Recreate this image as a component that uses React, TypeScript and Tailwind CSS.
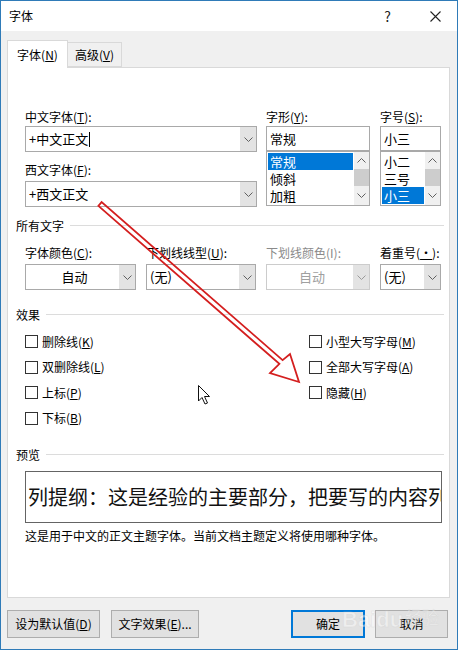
import clsx from "clsx";

const font = "font-['Noto_Sans_CJK_SC',sans-serif]";

function Chevron({ up = false, color = "#606060" }: { up?: boolean; color?: string }) {
  return (
    <svg width="9" height="5" viewBox="0 0 9 5">
      <polyline
        points={up ? "0.5,4.5 4.5,0.5 8.5,4.5" : "0.5,0.5 4.5,4.5 8.5,0.5"}
        fill="none"
        stroke={color}
        strokeWidth="1"
      />
    </svg>
  );
}

function Combo({
  className,
  children,
  center,
  disabled,
}: {
  className?: string;
  children?: React.ReactNode;
  center?: boolean;
  disabled?: boolean;
}) {
  return (
    <div
      className={clsx(
        "flex h-[26px] border bg-white",
        disabled ? "border-[#cccccc]" : "border-[#a9a9a9]",
        className
      )}
    >
      <div
        className={clsx(
          "flex flex-1 items-center text-[13px] whitespace-nowrap",
          center ? "justify-center pl-[4px]" : "pl-[3px]",
          disabled ? "text-[#a0a0a0]" : "text-black"
        )}
      >
        {children}
      </div>
      <div className="flex w-[16px] items-center justify-center bg-[#e3e3e3]">
        <Chevron color={disabled ? "#9a9a9a" : "#606060"} />
      </div>
    </div>
  );
}

function ListBox({
  items,
  selected,
  className,
}: {
  items: string[];
  selected: number;
  className?: string;
}) {
  return (
    <div className={clsx("flex h-[55px] border border-[#a9a9a9] bg-white", className)}>
      <div className="flex min-w-0 flex-1 flex-col overflow-hidden p-[1px]">
        {items.map((it, i) => (
          <div
            key={it}
            className={clsx(
              "h-[17px] overflow-hidden pl-[2px] text-[13px] leading-[17px] whitespace-nowrap",
              i === selected ? "bg-[#0078d7] text-white" : "text-black"
            )}
          >
            {it}
          </div>
        ))}
      </div>
      <div className="flex w-[15px] shrink-0 flex-col bg-[#f0f0f0]">
        <div className="flex h-[17px] items-center justify-center">
          <Chevron up />
        </div>
        <div className="h-[17px] bg-[#cdcdcd]" />
        <div className="flex flex-1 items-center justify-center">
          <Chevron />
        </div>
      </div>
    </div>
  );
}

function Section({ title, className }: { title: string; className?: string }) {
  return (
    <div className={clsx("flex h-[17px] items-center pl-[8px] pr-[5px]", className)}>
      <span className="text-[12px] leading-[17px]">{title}</span>
      <div className="ml-[6px] h-px flex-1 bg-[#dcdcdc]" />
    </div>
  );
}

function Label({ children, className, gray }: { children: React.ReactNode; className?: string; gray?: boolean }) {
  return (
    <div
      className={clsx(
        "h-[19px] text-[12px] leading-[19px] whitespace-nowrap",
        gray ? "text-[#8a8a8a]" : "text-black",
        className
      )}
    >
      {children}
    </div>
  );
}

function Check({ children }: { children: React.ReactNode }) {
  return (
    <div className="flex h-[25.5px] items-center">
      <div className="h-[13px] w-[13px] border border-[#333333] bg-white" />
      <span className="ml-[4px] text-[12px] leading-[16px]">{children}</span>
    </div>
  );
}

function Btn({ children, className, primary }: { children: React.ReactNode; className?: string; primary?: boolean }) {
  return (
    <div
      className={clsx(
        "flex h-[28px] items-center justify-center bg-[#e1e1e1] text-[12px]",
        primary ? "border-2 border-[#0078d7]" : "border border-[#adadad]",
        className
      )}
    >
      {children}
    </div>
  );
}

export default function App() {
  return (
    <div
      className={clsx(
        "relative flex h-[650px] w-[458px] flex-col overflow-hidden border border-[#2f7bb8] bg-[#f0f0f0] text-black",
        font
      )}
    >
      {/* Title bar */}
      <div className="flex h-[30px] items-center bg-white pl-[8px] pr-[16px]">
        <span className="text-[12px]">字体</span>
        <div className="ml-auto flex items-center">
          <span className="text-[14px] text-[#222]">?</span>
          <svg className="ml-[39px]" width="11" height="11" viewBox="0 0 11 11">
            <path d="M0.5 0.5 L10.5 10.5 M10.5 0.5 L0.5 10.5" stroke="#222" strokeWidth="1.1" />
          </svg>
        </div>
      </div>

      <div className="flex flex-col px-[6px] pt-[9px]">
        {/* Tabs */}
        <div className="flex h-[27px] items-end">
          <div className="relative z-10 mb-[-1px] flex h-[28px] w-[61px] items-center justify-center border border-b-0 border-[#d9d9d9] bg-white text-[12px]">
            字体(<u>N</u>)
          </div>
          <div className="flex h-[25px] w-[54px] items-center justify-center border border-l-0 border-[#d9d9d9] text-[12px]">
            高级(<u>V</u>)
          </div>
        </div>

        {/* Panel */}
        <div className="flex h-[531px] w-[443px] flex-col border border-[#d9d9d9] bg-white">
          {/* Fonts */}
          <div className="flex gap-[9px] pl-[17px] pt-[39px]">
            <div className="flex w-[232px] flex-col">
              <Label>中文字体(<u>T</u>):</Label>
              <Combo>
                +中文正文<span className="ml-[1px] inline-block h-[15px] w-px bg-black" />
              </Combo>
              <Label className="mt-[8px]">西文字体(<u>F</u>):</Label>
              <Combo className="mt-[2px]">+西文正文</Combo>
            </div>
            <div className="flex w-[104px] flex-col">
              <Label>字形(<u>Y</u>):</Label>
              <div className="flex h-[25px] items-center border border-[#a9a9a9] pl-[3px] text-[13px]">常规</div>
              <ListBox items={["常规", "倾斜", "加粗"]} selected={0} />
            </div>
            <div className="ml-[1px] flex w-[61px] flex-col">
              <Label>字号(<u>S</u>):</Label>
              <div className="flex h-[25px] items-center border border-[#a9a9a9] pl-[3px] text-[13px]">小三</div>
              <ListBox items={["小二", "三号", "小三"]} selected={2} />
            </div>
          </div>

          <Section title="所有文字" className="mt-[10px]" />

          <div className="mt-[9px] flex gap-[10px] pl-[17px]">
            <div className="flex w-[111px] flex-col">
              <Label>字体颜色(<u>C</u>):</Label>
              <Combo className="mt-[2px]" center>自动</Combo>
            </div>
            <div className="flex w-[110px] flex-col">
              <Label className="pl-[1px]">下划线线型(<u>U</u>):</Label>
              <Combo className="mt-[2px]">(无)</Combo>
            </div>
            <div className="flex w-[104px] flex-col">
              <Label gray>下划线颜色(I):</Label>
              <Combo className="mt-[2px]" center disabled>自动</Combo>
            </div>
            <div className="flex w-[61px] flex-col">
              <Label>着重号(<u>·</u>):</Label>
              <Combo className="mt-[2px]">(无)</Combo>
            </div>
          </div>

          <Section title="效果" className="mt-[16px]" />

          <div className="mt-[6px] flex pl-[17px]">
            <div className="flex w-[284px] flex-col">
              <Check>删除线(<u>K</u>)</Check>
              <Check>双删除线(<u>L</u>)</Check>
              <Check>上标(<u>P</u>)</Check>
              <Check>下标(<u>B</u>)</Check>
            </div>
            <div className="flex flex-col">
              <Check>小型大写字母(<u>M</u>)</Check>
              <Check>全部大写字母(<u>A</u>)</Check>
              <Check>隐藏(<u>H</u>)</Check>
            </div>
          </div>

          <Section title="预览" className="mt-[15px]" />

          <div className="ml-[17px] mt-[8px] flex h-[52px] w-[417px] items-center overflow-hidden whitespace-nowrap border border-[#646464] pl-[2px] text-[20px] text-[#111]">
            列提纲：这是经验的主要部分，把要写的内容列
          </div>
          <div className="ml-[17px] mt-[4px] h-[18px] text-[12px] leading-[18px]">
            这是用于中文的正文主题字体。当前文档主题定义将使用哪种字体。
          </div>
        </div>

        {/* Buttons */}
        <div className="mt-[12px] flex">
          <Btn className="w-[93px]">设为默认值(<u>D</u>)</Btn>
          <Btn className="ml-[11px] w-[88px]">文字效果(<u>E</u>)...</Btn>
          <Btn className="ml-[92px] w-[74px]" primary>确定</Btn>
          <Btn className="ml-[10px] w-[73px]">取消</Btn>
        </div>
      </div>

      {/* Annotation overlay: red arrow, mouse cursor, watermark */}
      <svg
        className="pointer-events-none absolute left-[-1px] top-[-1px]"
        width="458"
        height="650"
        viewBox="0 0 458 650"
      >
        <polygon
          points="98.4,205.9 279.4,363.9 270,373 299,382 290,354 282.6,360.1 101.6,202.1"
          fill="none"
          stroke="#d41f1f"
          strokeWidth="1.8"
          strokeLinejoin="miter"
        />
        <path
          d="M198.5 385.5 L198.5 401 L202 397.5 L205 404 L207.5 403 L204.5 396.5 L209.5 396.5 Z"
          fill="white"
          stroke="#111"
          strokeWidth="1"
        />
        <g opacity="0.45">
          <text x="342" y="627" fontSize="22" fontWeight="bold" fill="#ffffff" stroke="#cfcfcf" strokeWidth="0.5" fontFamily="Liberation Sans, sans-serif">
            Baidu
          </text>
          <text x="405" y="624" fontSize="17" fill="#ffffff" stroke="#cfcfcf" strokeWidth="0.4" fontFamily="Noto Sans CJK SC, sans-serif">
            经验
          </text>
        </g>
      </svg>
    </div>
  );
}
